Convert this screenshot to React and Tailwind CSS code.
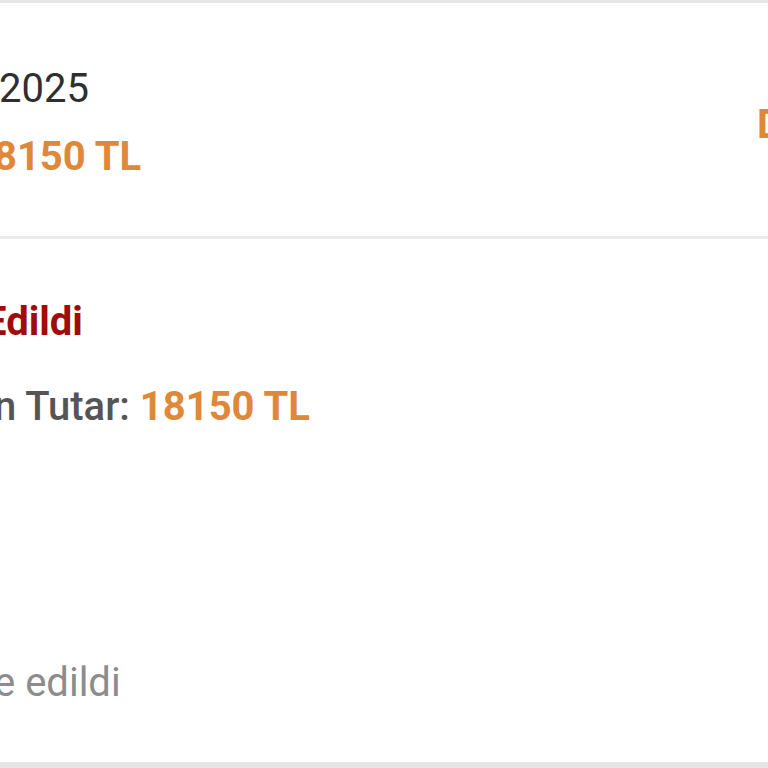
import React from 'react'

function App() {
  return (
    <div className="h-[768px] w-[768px] overflow-hidden bg-[#e6e6e6] pt-[3px] font-['Roboto',sans-serif]">
      <div className="h-[759px] overflow-hidden bg-white">
        {/* Order summary */}
        <div className="flex h-[236px] items-start justify-between border-b-[3px] border-[#ececec]">
          <div className="flex flex-col gap-[28px] pt-[66px]">
            <p className="-ml-[1px] text-[40px] leading-none text-[#2f2f2f]">2025</p>
            <p className="-ml-[29px] whitespace-nowrap text-[40px] font-bold leading-none text-[#e0883a]">18150 TL</p>
          </div>
          <div className="w-[11px] overflow-hidden pt-[102px]">
            <p className="whitespace-nowrap text-[40px] font-bold leading-none text-[#e0883a]">Detay</p>
          </div>
        </div>

        {/* Status */}
        <div className="flex flex-col pt-[63px]">
          <p className="-ml-[16px] whitespace-nowrap text-[40px] font-bold leading-none text-[#a00c0c]">Edildi</p>
          <p className="-ml-[6px] mt-[45px] whitespace-nowrap text-[40px] font-medium leading-none text-[#555555]">
            n Tutar: <span className="font-bold text-[#e0883a]">18150 TL</span>
          </p>
          <p className="-ml-[6px] mt-[236px] whitespace-nowrap text-[40px] leading-none text-[#8c8c8c]">e edildi</p>
        </div>
      </div>
    </div>
  )
}

export default App
